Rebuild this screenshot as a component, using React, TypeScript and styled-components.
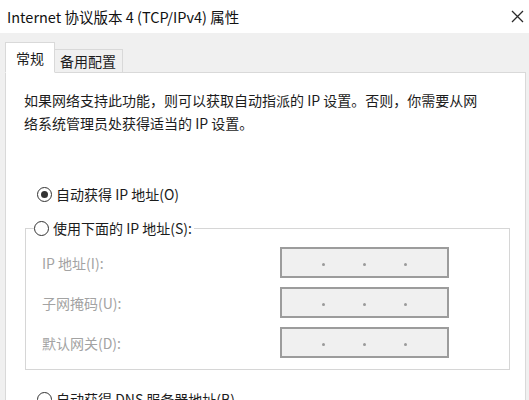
import React from "react";
import styled, { createGlobalStyle } from "styled-components";

const GlobalStyle = createGlobalStyle`
  html, body {
    margin: 0;
    padding: 0;
    background: #f0f0f0;
  }
  body {
    font-family: "Noto Sans CJK SC", "Noto Sans", sans-serif;
    font-size: 14px;
    color: #1c1c1c;
  }
`;

const Window = styled.div`
  width: 529px;
  height: 400px;
  overflow: hidden;
  background: #f0f0f0;
  display: flex;
  flex-direction: column;
`;

const TitleBar = styled.div`
  height: 33px;
  flex-shrink: 0;
  background: #fff;
  display: flex;
  align-items: center;
  justify-content: space-between;
  padding: 0 5px 0 7px;
  box-sizing: border-box;
  font-size: 14.5px;
  color: #111;
`;

const CloseBtn = styled.div`
  width: 13px;
  height: 13px;
  display: flex;
  flex-shrink: 0;
`;

const Body = styled.div`
  padding: 9px 3px 0 5px;
  flex: 1;
  min-width: 0;
  display: flex;
  flex-direction: column;
`;

const TabStrip = styled.div`
  display: flex;
  align-items: flex-end;
  height: 31px;
  margin-bottom: -1px;
  position: relative;
  z-index: 1;
`;

const Tab = styled.div<{ $active?: boolean }>`
  height: ${(p) => (p.$active ? "31px" : "24px")};
  box-sizing: border-box;
  display: flex;
  align-items: center;
  padding: ${(p) => (p.$active ? "0 10px 0 10px" : "0 6px 0 5px")};
  background: ${(p) => (p.$active ? "#fff" : "#f0f0f0")};
  border: 1px solid #d9d9d9;
  border-bottom: ${(p) => (p.$active ? "1px solid #fff" : "1px solid #d9d9d9")};
  border-left: ${(p) => (p.$active ? "1px solid #d9d9d9" : "none")};
  color: #1c1c1c;
`;

const Panel = styled.div`
  flex: 1;
  min-width: 0;
  overflow: hidden;
  background: #fff;
  border: 1px solid #d9d9d9;
  padding: 16px 15px 0 18px;
`;

const Description = styled.p`
  margin: 0;
  line-height: 23px;
`;

const DescLine = styled.span`
  display: block;
  white-space: nowrap;
`;

const RadioRow = styled.label<{ $top: number }>`
  display: flex;
  align-items: center;
  height: 24px;
  margin-top: ${(p) => p.$top}px;
  margin-left: 13px;
  gap: 4px;
`;

const Radio = styled.span<{ $checked?: boolean }>`
  width: 15px;
  height: 15px;
  box-sizing: border-box;
  border-radius: 50%;
  border: 1.5px solid #333;
  background: #fff;
  display: flex;
  align-items: center;
  justify-content: center;
  flex-shrink: 0;

  &::after {
    content: "";
    width: 7px;
    height: 7px;
    border-radius: 50%;
    background: ${(p) => (p.$checked ? "#333" : "transparent")};
  }
`;

const GroupBox = styled.fieldset`
  margin: 10px 0 0 1px;
  padding: 0;
  border: 1px solid #d6d6d6;
  min-width: 0;
  min-inline-size: 0;
`;

const GroupLegend = styled.legend`
  margin-left: 8px;
  padding: 0 2px 0 0;
  display: flex;
  align-items: center;
  gap: 4px;
  height: 24px;
`;

const FieldGrid = styled.div`
  display: grid;
  grid-template-columns: 238px 169px;
  row-gap: 9px;
  align-items: center;
  padding: 7px 0 11px 16px;
`;

const FieldLabel = styled.span`
  color: #a3a3a3;
`;

const IpBox = styled.div`
  height: 31px;
  box-sizing: border-box;
  background: #f0f0f0;
  border: 2px solid #9c9c9c;
  display: flex;
  align-items: center;
  justify-content: center;
  gap: 38px;
  padding-top: 4px;
`;

const IpDot = styled.span`
  width: 3px;
  height: 3px;
  border-radius: 50%;
  background: #9a9a9a;
`;

const fields = ["IP 地址(I):", "子网掩码(U):", "默认网关(D):"];

export default function App() {
  return (
    <>
      <GlobalStyle />
      <Window>
        <TitleBar>
          <span>Internet 协议版本 4 (TCP/IPv4) 属性</span>
          <CloseBtn>
            <svg width="13" height="13" viewBox="0 0 13 13">
              <path d="M1 1 L12 12 M12 1 L1 12" stroke="#2a2a2a" strokeWidth="1.3" />
            </svg>
          </CloseBtn>
        </TitleBar>
        <Body>
          <TabStrip>
            <Tab $active>常规</Tab>
            <Tab>备用配置</Tab>
          </TabStrip>
          <Panel>
            <Description>
              <DescLine>如果网络支持此功能，则可以获取自动指派的 IP 设置。否则，你需要从网</DescLine>
              <DescLine>络系统管理员处获得适当的 IP 设置。</DescLine>
            </Description>
            <RadioRow $top={47}>
              <Radio $checked />
              自动获得 IP 地址(O)
            </RadioRow>
            <GroupBox>
              <GroupLegend>
                <Radio />
                使用下面的 IP 地址(S):
              </GroupLegend>
              <FieldGrid>
                {fields.map((f) => (
                  <React.Fragment key={f}>
                    <FieldLabel>{f}</FieldLabel>
                    <IpBox>
                      <IpDot />
                      <IpDot />
                      <IpDot />
                    </IpBox>
                  </React.Fragment>
                ))}
              </FieldGrid>
            </GroupBox>
            <RadioRow $top={17}>
              <Radio />
              自动获得 DNS 服务器地址(B)
            </RadioRow>
          </Panel>
        </Body>
      </Window>
    </>
  );
}
